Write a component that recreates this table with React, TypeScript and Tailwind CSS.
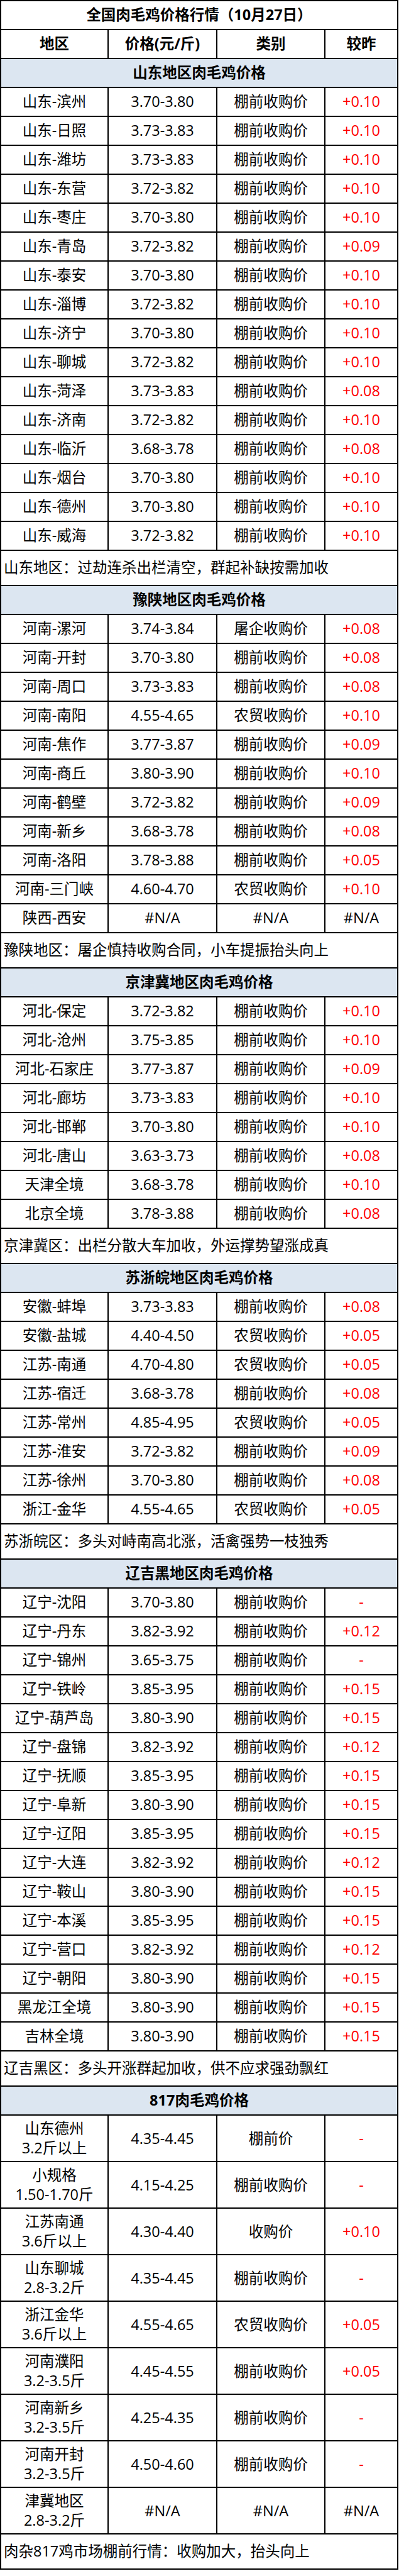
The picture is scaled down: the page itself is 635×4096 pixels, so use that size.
import React from "react";

type Row = [string, string, string, string];

const FONT = "font-['Open_Sans','Noto_Sans_CJK_SC',sans-serif]";

const sections: { title: string; rows: Row[]; note: string; tall?: boolean }[] = [
  {
    title: "山东地区肉毛鸡价格",
    rows: [
      ["山东-滨州", "3.70-3.80", "棚前收购价", "+0.10"],
      ["山东-日照", "3.73-3.83", "棚前收购价", "+0.10"],
      ["山东-潍坊", "3.73-3.83", "棚前收购价", "+0.10"],
      ["山东-东营", "3.72-3.82", "棚前收购价", "+0.10"],
      ["山东-枣庄", "3.70-3.80", "棚前收购价", "+0.10"],
      ["山东-青岛", "3.72-3.82", "棚前收购价", "+0.09"],
      ["山东-泰安", "3.70-3.80", "棚前收购价", "+0.10"],
      ["山东-淄博", "3.72-3.82", "棚前收购价", "+0.10"],
      ["山东-济宁", "3.70-3.80", "棚前收购价", "+0.10"],
      ["山东-聊城", "3.72-3.82", "棚前收购价", "+0.10"],
      ["山东-菏泽", "3.73-3.83", "棚前收购价", "+0.08"],
      ["山东-济南", "3.72-3.82", "棚前收购价", "+0.10"],
      ["山东-临沂", "3.68-3.78", "棚前收购价", "+0.08"],
      ["山东-烟台", "3.70-3.80", "棚前收购价", "+0.10"],
      ["山东-德州", "3.70-3.80", "棚前收购价", "+0.10"],
      ["山东-威海", "3.72-3.82", "棚前收购价", "+0.10"],
    ],
    note: "山东地区：过劫连杀出栏清空，群起补缺按需加收",
  },
  {
    title: "豫陕地区肉毛鸡价格",
    rows: [
      ["河南-漯河", "3.74-3.84", "屠企收购价", "+0.08"],
      ["河南-开封", "3.70-3.80", "棚前收购价", "+0.08"],
      ["河南-周口", "3.73-3.83", "棚前收购价", "+0.08"],
      ["河南-南阳", "4.55-4.65", "农贸收购价", "+0.10"],
      ["河南-焦作", "3.77-3.87", "棚前收购价", "+0.09"],
      ["河南-商丘", "3.80-3.90", "棚前收购价", "+0.10"],
      ["河南-鹤壁", "3.72-3.82", "棚前收购价", "+0.09"],
      ["河南-新乡", "3.68-3.78", "棚前收购价", "+0.08"],
      ["河南-洛阳", "3.78-3.88", "棚前收购价", "+0.05"],
      ["河南-三门峡", "4.60-4.70", "农贸收购价", "+0.10"],
      ["陕西-西安", "#N/A", "#N/A", "#N/A"],
    ],
    note: "豫陕地区：屠企慎持收购合同，小车提振抬头向上",
  },
  {
    title: "京津冀地区肉毛鸡价格",
    rows: [
      ["河北-保定", "3.72-3.82", "棚前收购价", "+0.10"],
      ["河北-沧州", "3.75-3.85", "棚前收购价", "+0.10"],
      ["河北-石家庄", "3.77-3.87", "棚前收购价", "+0.09"],
      ["河北-廊坊", "3.73-3.83", "棚前收购价", "+0.10"],
      ["河北-邯郸", "3.70-3.80", "棚前收购价", "+0.10"],
      ["河北-唐山", "3.63-3.73", "棚前收购价", "+0.08"],
      ["天津全境", "3.68-3.78", "棚前收购价", "+0.10"],
      ["北京全境", "3.78-3.88", "棚前收购价", "+0.08"],
    ],
    note: "京津冀区：出栏分散大车加收，外运撑势望涨成真",
  },
  {
    title: "苏浙皖地区肉毛鸡价格",
    rows: [
      ["安徽-蚌埠", "3.73-3.83", "棚前收购价", "+0.08"],
      ["安徽-盐城", "4.40-4.50", "农贸收购价", "+0.05"],
      ["江苏-南通", "4.70-4.80", "农贸收购价", "+0.05"],
      ["江苏-宿迁", "3.68-3.78", "棚前收购价", "+0.08"],
      ["江苏-常州", "4.85-4.95", "农贸收购价", "+0.05"],
      ["江苏-淮安", "3.72-3.82", "棚前收购价", "+0.09"],
      ["江苏-徐州", "3.70-3.80", "棚前收购价", "+0.08"],
      ["浙江-金华", "4.55-4.65", "农贸收购价", "+0.05"],
    ],
    note: "苏浙皖区：多头对峙南高北涨，活禽强势一枝独秀",
  },
  {
    title: "辽吉黑地区肉毛鸡价格",
    rows: [
      ["辽宁-沈阳", "3.70-3.80", "棚前收购价", "-"],
      ["辽宁-丹东", "3.82-3.92", "棚前收购价", "+0.12"],
      ["辽宁-锦州", "3.65-3.75", "棚前收购价", "-"],
      ["辽宁-铁岭", "3.85-3.95", "棚前收购价", "+0.15"],
      ["辽宁-葫芦岛", "3.80-3.90", "棚前收购价", "+0.15"],
      ["辽宁-盘锦", "3.82-3.92", "棚前收购价", "+0.12"],
      ["辽宁-抚顺", "3.85-3.95", "棚前收购价", "+0.15"],
      ["辽宁-阜新", "3.80-3.90", "棚前收购价", "+0.15"],
      ["辽宁-辽阳", "3.85-3.95", "棚前收购价", "+0.15"],
      ["辽宁-大连", "3.82-3.92", "棚前收购价", "+0.12"],
      ["辽宁-鞍山", "3.80-3.90", "棚前收购价", "+0.15"],
      ["辽宁-本溪", "3.85-3.95", "棚前收购价", "+0.15"],
      ["辽宁-营口", "3.82-3.92", "棚前收购价", "+0.12"],
      ["辽宁-朝阳", "3.80-3.90", "棚前收购价", "+0.15"],
      ["黑龙江全境", "3.80-3.90", "棚前收购价", "+0.15"],
      ["吉林全境", "3.80-3.90", "棚前收购价", "+0.15"],
    ],
    note: "辽吉黑区：多头开涨群起加收，供不应求强劲飘红",
  },
  {
    title: "817肉毛鸡价格",
    tall: true,
    rows: [
      ["山东德州\n3.2斤以上", "4.35-4.45", "棚前价", "-"],
      ["小规格\n1.50-1.70斤", "4.15-4.25", "棚前收购价", "-"],
      ["江苏南通\n3.6斤以上", "4.30-4.40", "收购价", "+0.10"],
      ["山东聊城\n2.8-3.2斤", "4.35-4.45", "棚前收购价", "-"],
      ["浙江金华\n3.6斤以上", "4.55-4.65", "农贸收购价", "+0.05"],
      ["河南濮阳\n3.2-3.5斤", "4.45-4.55", "棚前收购价", "+0.05"],
      ["河南新乡\n3.2-3.5斤", "4.25-4.35", "棚前收购价", "-"],
      ["河南开封\n3.2-3.5斤", "4.50-4.60", "棚前收购价", "-"],
      ["津冀地区\n2.8-3.2斤", "#N/A", "#N/A", "#N/A"],
    ],
    note: "肉杂817鸡市场棚前行情：收购加大，抬头向上",
  },
];

function Cell({ children, tall, red }: { children: React.ReactNode; tall?: boolean; red?: boolean }) {
  return (
    <div
      className={`bg-white flex flex-col items-center justify-center text-center ${
        tall ? "h-[72px] leading-[31px]" : "h-[44px] leading-none"
      } ${red ? "text-[#ff0000]" : "text-black"}`}
    >
      {children}
    </div>
  );
}

export default function App() {
  return (
    <div className={`w-[635px] bg-white ${FONT} text-[23.5px] text-black`}>
      <div className="w-[634px] bg-black p-[2px] grid grid-cols-[169px_171px_170px_114px] gap-[2px]">
        <div className="col-span-4 bg-white h-[44px] flex items-center justify-center font-bold leading-none">
          全国肉毛鸡价格行情（10月27日）
        </div>
        <Cell><span className="font-bold">地区</span></Cell>
        <Cell><span className="font-bold">价格(元/斤)</span></Cell>
        <Cell><span className="font-bold">类别</span></Cell>
        <Cell><span className="font-bold">较昨</span></Cell>
        {sections.map((s) => (
          <React.Fragment key={s.title}>
            <div className="col-span-4 bg-[#dce6f1] h-[44px] flex items-center justify-center font-bold leading-none">
              {s.title}
            </div>
            {s.rows.map((r, i) => {
              const na = r[3] === "#N/A";
              return (
                <React.Fragment key={i}>
                  <Cell tall={s.tall}>
                    {r[0].split("\n").map((l, j) => (
                      <span key={j} className="block">{l}</span>
                    ))}
                  </Cell>
                  <Cell tall={s.tall}>{r[1]}</Cell>
                  <Cell tall={s.tall}>{r[2]}</Cell>
                  <Cell tall={s.tall} red={!na}>{r[3]}</Cell>
                </React.Fragment>
              );
            })}
            <div className="col-span-4 bg-white h-[54px] flex items-center pl-[4px] leading-none">
              {s.note}
            </div>
          </React.Fragment>
        ))}
      </div>
    </div>
  );
}
